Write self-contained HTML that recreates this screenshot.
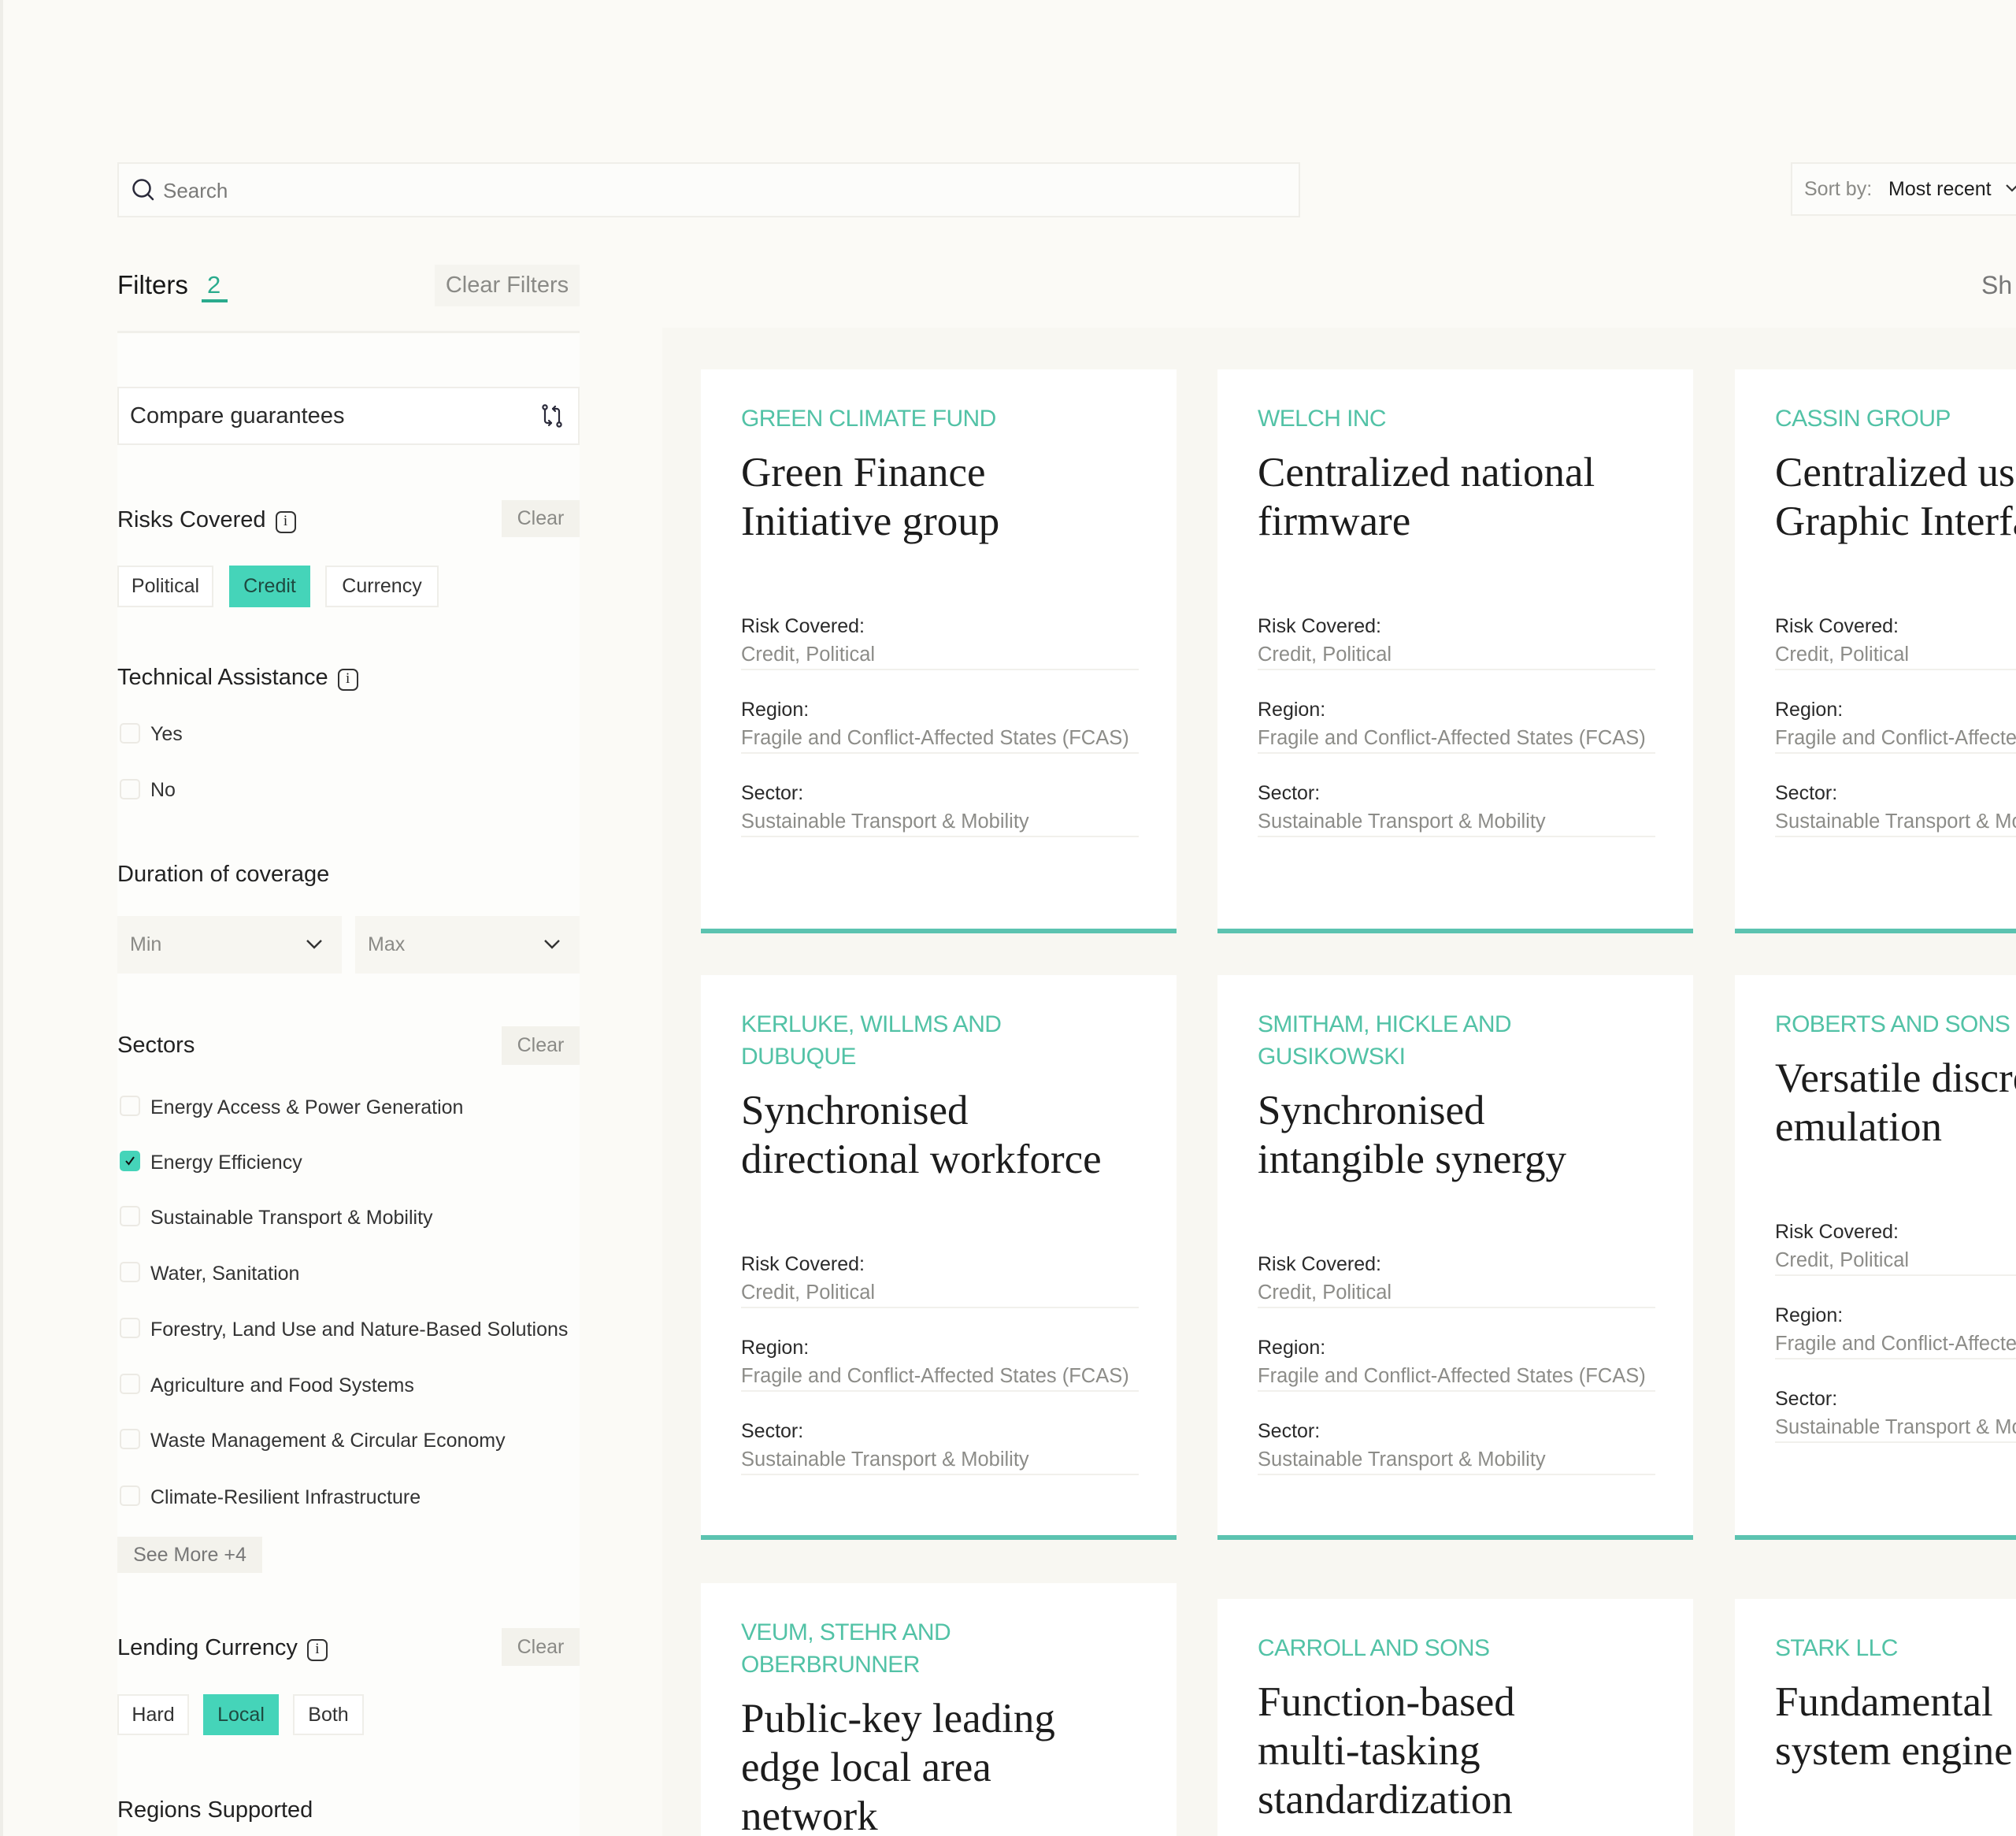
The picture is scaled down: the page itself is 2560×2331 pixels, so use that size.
<!DOCTYPE html>
<html style="width:2560px;height:2331px;overflow:hidden"><head><meta charset="utf-8">
<style>
*{box-sizing:border-box;margin:0;padding:0}
body{width:2560px;height:2331px;background:#fbfaf6;font-family:"Liberation Sans",sans-serif;color:#1f1f1f;position:relative;overflow:hidden}
.a{position:absolute}
.t{position:absolute;white-space:nowrap}
.box{position:absolute;background:#fff;border:2px solid #efeee9}
.h{font-size:29px;color:#222}
.clr{position:absolute;background:#f3f2ec;color:#8a8a86;font-size:25px;display:flex;align-items:center;justify-content:center}
.chip{position:absolute;background:#fff;border:2px solid #efeee9;font-size:25px;color:#333;display:flex;align-items:center;justify-content:center}
.chip.on{background:#45d4b9;border-color:#45d4b9;color:#1e4a40}
.cb{position:absolute;left:152px;width:26px;height:26px;border:2px solid #eceae4;border-radius:5px;background:#fcfcfa}
.cb.on{background:#45d4b9;border-color:#45d4b9}
.it{position:absolute;left:191px;font-size:25px;color:#333;white-space:nowrap;line-height:36px}
.info{display:inline-block;width:26px;height:28px;border:2.5px solid #333;border-radius:7px;font-size:19px;text-align:center;line-height:22px;vertical-align:2px;margin-left:12px;font-family:"Liberation Serif",serif}
.card{position:absolute;width:604px;background:#fff;border-bottom:6px solid #5cc3b0;padding:42px 51px 0;overflow:hidden}
.co{font-size:30px;line-height:41px;color:#52c2a6;letter-spacing:-0.6px;white-space:nowrap}
.ti{font-family:"Liberation Serif",serif;font-size:53px;line-height:62px;color:#1c1c1c;margin-top:17px;white-space:nowrap}
.f{width:505px;border-bottom:2px solid #f1f0ec;margin-bottom:32px}
.f .l{font-size:25px;line-height:36px;color:#2a2a2a;white-space:nowrap}
.f .v{font-size:25.5px;line-height:36px;color:#8c8c88;white-space:nowrap}
.fs{margin-top:84px}
</style></head><body>
<div class="a" style="left:0;top:0;width:4px;height:2331px;background:#eeede8"></div>

<div class="box" style="left:149px;top:206px;width:1502px;height:70px;background:#fcfcfa"></div>
<svg class="a" style="left:166px;top:225px" width="32" height="32" viewBox="0 0 32 32"><circle cx="14" cy="14" r="10.5" fill="none" stroke="#2a2a3a" stroke-width="2.5"/><line x1="22" y1="22" x2="28" y2="28" stroke="#2a2a3a" stroke-width="2.5" stroke-linecap="round"/></svg>
<div class="t" style="left:207px;top:224px;font-size:26px;line-height:36px;color:#7a7a78">Search</div>

<div class="box" style="left:2274px;top:206px;width:320px;height:68px;background:#fcfcfa"></div>
<div class="t" style="left:2291px;top:222px;font-size:25px;line-height:36px;color:#8a8a86">Sort by:</div>
<div class="t" style="left:2398px;top:222px;font-size:25px;line-height:36px;color:#1d1d1d">Most recent</div>
<svg class="a" style="left:2546px;top:232px" width="20" height="14"><polyline points="2,3 9,10 16,3" fill="none" stroke="#333" stroke-width="2.2"/></svg>
<div class="t" style="left:2516px;top:342px;font-size:32px;line-height:40px;color:#777">Sh</div>

<div class="t" style="left:149px;top:342px;font-size:33px;line-height:40px;color:#161616">Filters</div>
<div class="t" style="left:263px;top:342px;font-size:31px;line-height:40px;color:#2aab8d">2</div>
<div class="a" style="left:256px;top:380px;width:33px;height:4px;background:#2aab8d"></div>
<div class="clr" style="left:552px;top:336px;width:184px;height:53px;font-size:29px;background:#f5f4ef">Clear Filters</div>
<div class="a" style="left:149px;top:420px;width:587px;height:3px;background:#f0efea"></div>
<div class="a" style="left:149px;top:423px;width:587px;height:1908px;background:#fdfdfb"></div>

<div class="box" style="left:149px;top:491px;width:587px;height:74px"></div>
<div class="t" style="left:165px;top:510px;font-size:29px;line-height:36px;color:#2b2b2b">Compare guarantees</div>
<svg class="a" style="left:686px;top:512px" width="30" height="32" viewBox="0 0 30 32"><g fill="none" stroke="#2a2a3a" stroke-width="2.2" stroke-linecap="round" stroke-linejoin="round"><circle cx="6" cy="5" r="2.6"/><circle cx="24" cy="27" r="2.6"/><path d="M6 8v14a3 3 0 0 0 3 3h5"/><path d="M24 24V10a3 3 0 0 0-3-3h-5"/><path d="M19 4l-3 3 3 3"/><path d="M11 22l3 3-3 3"/></g></svg>

<div class="t h" style="left:149px;top:642px;line-height:36px">Risks Covered<span class="info">i</span></div>
<div class="clr" style="left:637px;top:635px;width:99px;height:47px">Clear</div>
<div class="chip" style="left:149px;top:718px;width:122px;height:53px">Political</div>
<div class="chip on" style="left:291px;top:718px;width:103px;height:53px">Credit</div>
<div class="chip" style="left:413px;top:718px;width:144px;height:53px">Currency</div>

<div class="t h" style="left:149px;top:842px;line-height:36px">Technical Assistance<span class="info">i</span></div>
<div class="cb" style="top:918px"></div><div class="it" style="top:914px">Yes</div>
<div class="cb" style="top:989px"></div><div class="it" style="top:985px">No</div>

<div class="t h" style="left:149px;top:1092px;line-height:36px">Duration of coverage</div>
<div class="a" style="left:149px;top:1163px;width:285px;height:73px;background:#f7f6f1"></div>
<div class="t" style="left:165px;top:1181px;font-size:25px;line-height:36px;color:#8a8a86">Min</div>
<svg class="a" style="left:388px;top:1192px" width="22" height="14"><polyline points="2,2 11,11 20,2" fill="none" stroke="#333" stroke-width="2.4"/></svg>
<div class="a" style="left:451px;top:1163px;width:285px;height:73px;background:#f7f6f1"></div>
<div class="t" style="left:467px;top:1181px;font-size:25px;line-height:36px;color:#8a8a86">Max</div>
<svg class="a" style="left:690px;top:1192px" width="22" height="14"><polyline points="2,2 11,11 20,2" fill="none" stroke="#333" stroke-width="2.4"/></svg>

<div class="t h" style="left:149px;top:1309px;line-height:36px">Sectors</div>
<div class="clr" style="left:637px;top:1303px;width:99px;height:49px">Clear</div>
<div class="cb" style="top:1391px"></div><div class="it" style="top:1388px">Energy Access &amp; Power Generation</div>
<div class="cb on" style="top:1461px"><svg width="22" height="22" style="position:absolute;left:0;top:0"><polyline points="6,11 9.5,15 16,6" fill="none" stroke="#111" stroke-width="2"/></svg></div><div class="it" style="top:1458px">Energy Efficiency</div>
<div class="cb" style="top:1531px"></div><div class="it" style="top:1528px">Sustainable Transport &amp; Mobility</div>
<div class="cb" style="top:1602px"></div><div class="it" style="top:1599px">Water, Sanitation</div>
<div class="cb" style="top:1673px"></div><div class="it" style="top:1670px">Forestry, Land Use and Nature-Based Solutions</div>
<div class="cb" style="top:1744px"></div><div class="it" style="top:1741px">Agriculture and Food Systems</div>
<div class="cb" style="top:1814px"></div><div class="it" style="top:1811px">Waste Management &amp; Circular Economy</div>
<div class="cb" style="top:1886px"></div><div class="it" style="top:1883px">Climate-Resilient Infrastructure</div>
<div class="clr" style="left:149px;top:1951px;width:184px;height:46px;color:#777">See More +4</div>

<div class="t h" style="left:149px;top:2074px;line-height:36px">Lending Currency<span class="info">i</span></div>
<div class="clr" style="left:637px;top:2067px;width:99px;height:48px">Clear</div>
<div class="chip" style="left:149px;top:2151px;width:91px;height:52px">Hard</div>
<div class="chip on" style="left:258px;top:2151px;width:96px;height:52px">Local</div>
<div class="chip" style="left:372px;top:2151px;width:90px;height:52px">Both</div>
<div class="t h" style="left:149px;top:2280px;line-height:36px">Regions Supported</div>

<div class="a" style="left:841px;top:416px;width:1719px;height:1915px;background:#f8f7f2"></div>

<div class="card" style="left:890px;top:469px;height:716px"><div class="co">GREEN CLIMATE FUND</div><div class="ti">Green Finance<br>Initiative group</div><div class="fs"></div>
<div class="f"><div class="l">Risk Covered:</div><div class="v">Credit, Political</div></div><div class="f"><div class="l">Region:</div><div class="v">Fragile and Conflict-Affected States (FCAS)</div></div><div class="f"><div class="l">Sector:</div><div class="v">Sustainable Transport &amp; Mobility</div></div></div>
<div class="card" style="left:1546px;top:469px;height:716px"><div class="co">WELCH INC</div><div class="ti">Centralized national<br>firmware</div><div class="fs"></div>
<div class="f"><div class="l">Risk Covered:</div><div class="v">Credit, Political</div></div><div class="f"><div class="l">Region:</div><div class="v">Fragile and Conflict-Affected States (FCAS)</div></div><div class="f"><div class="l">Sector:</div><div class="v">Sustainable Transport &amp; Mobility</div></div></div>
<div class="card" style="left:2203px;top:469px;height:716px"><div class="co">CASSIN GROUP</div><div class="ti">Centralized user-facing<br>Graphic Interface</div><div class="fs"></div>
<div class="f"><div class="l">Risk Covered:</div><div class="v">Credit, Political</div></div><div class="f"><div class="l">Region:</div><div class="v">Fragile and Conflict-Affected States (FCAS)</div></div><div class="f"><div class="l">Sector:</div><div class="v">Sustainable Transport &amp; Mobility</div></div></div>

<div class="card" style="left:890px;top:1238px;height:717px"><div class="co">KERLUKE, WILLMS AND<br>DUBUQUE</div><div class="ti">Synchronised<br>directional workforce</div><div class="fs"></div>
<div class="f"><div class="l">Risk Covered:</div><div class="v">Credit, Political</div></div><div class="f"><div class="l">Region:</div><div class="v">Fragile and Conflict-Affected States (FCAS)</div></div><div class="f"><div class="l">Sector:</div><div class="v">Sustainable Transport &amp; Mobility</div></div></div>
<div class="card" style="left:1546px;top:1238px;height:717px"><div class="co">SMITHAM, HICKLE AND<br>GUSIKOWSKI</div><div class="ti">Synchronised<br>intangible synergy</div><div class="fs"></div>
<div class="f"><div class="l">Risk Covered:</div><div class="v">Credit, Political</div></div><div class="f"><div class="l">Region:</div><div class="v">Fragile and Conflict-Affected States (FCAS)</div></div><div class="f"><div class="l">Sector:</div><div class="v">Sustainable Transport &amp; Mobility</div></div></div>
<div class="card" style="left:2203px;top:1238px;height:717px"><div class="co">ROBERTS AND SONS</div><div class="ti">Versatile discrete<br>emulation</div><div class="fs"></div>
<div class="f"><div class="l">Risk Covered:</div><div class="v">Credit, Political</div></div><div class="f"><div class="l">Region:</div><div class="v">Fragile and Conflict-Affected States (FCAS)</div></div><div class="f"><div class="l">Sector:</div><div class="v">Sustainable Transport &amp; Mobility</div></div></div>

<div class="card" style="left:890px;top:2010px;height:321px;border-bottom:none"><div class="co">VEUM, STEHR AND<br>OBERBRUNNER</div><div class="ti">Public-key leading<br>edge local area<br>network</div></div>
<div class="card" style="left:1546px;top:2030px;height:301px;border-bottom:none"><div class="co">CARROLL AND SONS</div><div class="ti">Function-based<br>multi-tasking<br>standardization</div></div>
<div class="card" style="left:2203px;top:2030px;height:301px;border-bottom:none"><div class="co">STARK LLC</div><div class="ti">Fundamental<br>system engine</div></div>
</body></html>
